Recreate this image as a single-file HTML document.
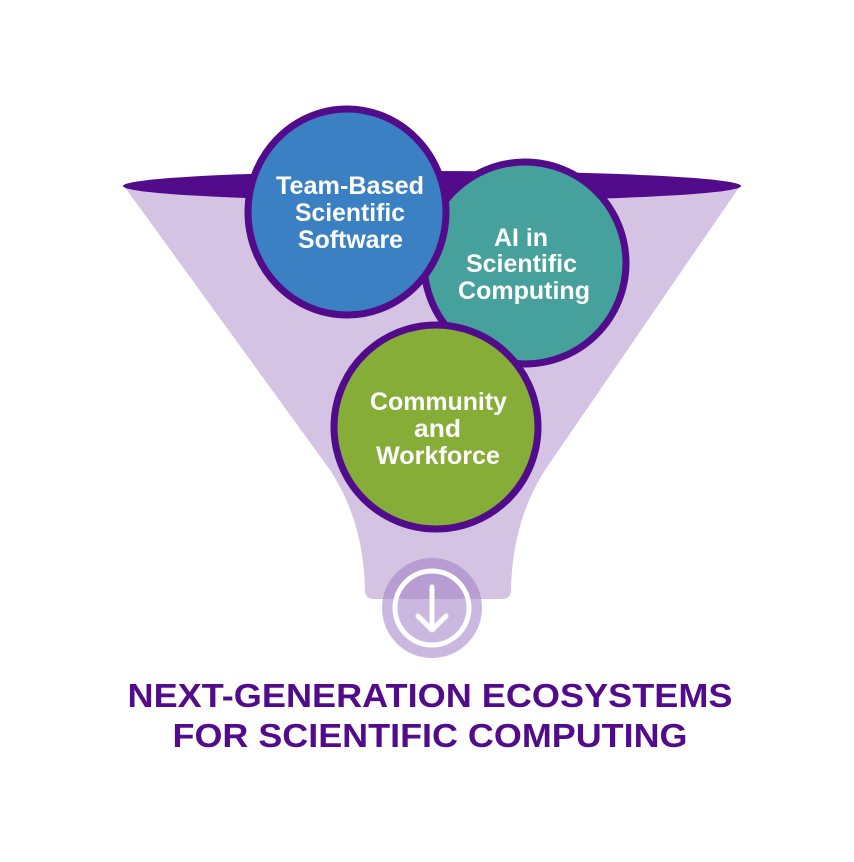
<!DOCTYPE html>
<html><head><style>html,body{margin:0;padding:0;background:#fff;width:854px;height:862px;overflow:hidden}</style></head>
<body>
<svg width="854" height="862" viewBox="0 0 854 862" xmlns="http://www.w3.org/2000/svg" font-family="Liberation Sans, Arial, sans-serif" font-weight="bold">
<path d="M124,186 L740,186 L545,470 C520,510 512,550 511,590 Q511,599 502,599 L374,599 Q365,599 365,590 C364,550 356,510 330,470 Z" fill="#d4c3e3"/>
<ellipse cx="432" cy="186" rx="309" ry="15" fill="#520b8a"/>
<circle cx="525" cy="263" r="101" fill="#46a09c" stroke="#520b8a" stroke-width="7"/>
<ellipse cx="347" cy="212" rx="99" ry="103" fill="#3a80c3" stroke="#520b8a" stroke-width="7"/>
<circle cx="436" cy="427" r="102" fill="#85ad37" stroke="#520b8a" stroke-width="7"/>
<g fill="#fff" font-size="25">
<text x="276" y="194" textLength="148" lengthAdjust="spacingAndGlyphs">Team-Based</text>
<text x="295" y="221" textLength="110" lengthAdjust="spacingAndGlyphs">Scientific</text>
<text x="298" y="248" textLength="105" lengthAdjust="spacingAndGlyphs">Software</text>
<text x="494" y="246" textLength="54" lengthAdjust="spacingAndGlyphs">AI in</text>
<text x="466" y="272" textLength="111" lengthAdjust="spacingAndGlyphs">Scientific</text>
<text x="458" y="299" textLength="132" lengthAdjust="spacingAndGlyphs">Computing</text>
<text x="370" y="410" textLength="137" lengthAdjust="spacingAndGlyphs">Community</text>
<text x="414" y="437" textLength="47" lengthAdjust="spacingAndGlyphs">and</text>
<text x="376" y="464" textLength="124" lengthAdjust="spacingAndGlyphs">Workforce</text>
</g>
<circle cx="432" cy="608" r="50" fill="#a17ec6" fill-opacity="0.55"/>
<circle cx="432" cy="608" r="37" fill="none" stroke="#fff" stroke-width="5"/>
<path d="M432,587 L432,630 M418,616 L432,630 L446,616" fill="none" stroke="#fff" stroke-width="5" stroke-linecap="round" stroke-linejoin="round"/>
<g fill="#520b8a" font-size="33" text-anchor="middle">
<text x="430" y="707" textLength="605" lengthAdjust="spacingAndGlyphs">NEXT-GENERATION ECOSYSTEMS</text>
<text x="430" y="747" textLength="515" lengthAdjust="spacingAndGlyphs">FOR SCIENTIFIC COMPUTING</text>
</g>
</svg>
</body></html>
